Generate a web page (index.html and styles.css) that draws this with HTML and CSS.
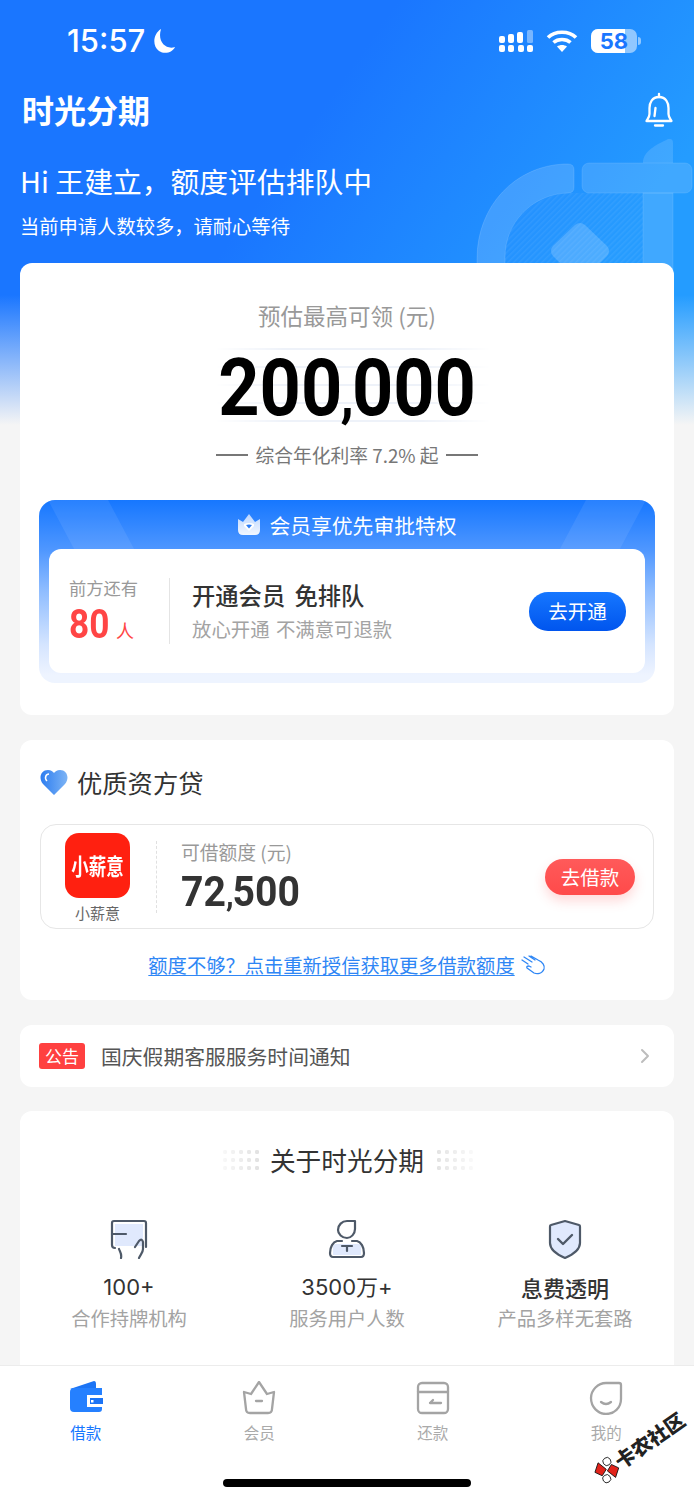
FILE: index.html
```html
<!DOCTYPE html>
<html lang="zh-CN">
<head>
<meta charset="utf-8">
<title>时光分期</title>
<link rel="stylesheet" href="styles.css">
</head>
<body>
<div class="page">
  <svg class="art" viewBox="0 0 222 140" width="222" height="140" aria-hidden="true">
    <defs>
      <pattern id="hatch" width="4" height="4" patternUnits="userSpaceOnUse" patternTransform="rotate(45)"><rect width="4" height="4" fill="#3f9bff" fill-opacity=".1"/><rect width="1.500" height="4" fill="#fff" fill-opacity=".06"/></pattern>
    </defs>
    <path d="M33 140 V118 C33 84 62 56 96 54 H171 V140 Z" fill="url(#hatch)"/>
    <path d="M5 140 V120 C5 66 44 27 92 25 H96 Q102 25 102 31 V48 Q102 54 96 54 C60 55 33 84 33 118 V140 Z" fill="#fff" fill-opacity=".15" stroke="#fff" stroke-opacity=".12"/>
    <rect x="110" y="24" width="110" height="30" rx="7" fill="#fff" fill-opacity=".13" stroke="#fff" stroke-opacity=".1"/>
    <path d="M171 24 C171 12 184 6 196 0 Q201 -1 201 4 V24Z" fill="#fff" fill-opacity=".13"/>
    <rect x="171" y="54" width="30" height="86" fill="#fff" fill-opacity=".13" stroke="#fff" stroke-opacity=".1"/>
    <path d="M81 107 L103 86 Q108 82 113 86 L135 107 Q139 112 135 117 L112 140 H104 L81 117 Q77 112 81 107Z" fill="#fff" fill-opacity=".18"/>
  </svg>

  <header class="hero">
    <div class="status">
      <div class="clock"><span>15:57</span>
        <svg width="24" height="26" viewBox="0 0 24 26"><path d="M9 1 C1 6 0 18 7 23 C13 27 21 24 23 19 C14 22 5 14 9 1Z" fill="#fff"/></svg>
      </div>
      <div class="status-right">
        <svg width="36" height="22" viewBox="0 0 36 22" fill="#fff">
          <rect x="0" y="6" width="6" height="7" rx="2"/><rect x="9" y="4" width="6" height="9" rx="2"/><rect x="18" y="2" width="6" height="11" rx="2"/><rect x="28" y="0" width="6" height="13" rx="1.5" fill-opacity=".4"/>
          <rect x="0" y="15" width="6" height="7" rx="2"/><rect x="9" y="15" width="6" height="7" rx="2"/><rect x="19" y="15" width="6" height="7" rx="2"/><rect x="28" y="15" width="6" height="7" rx="2"/>
        </svg>
        <svg class="wifi" width="32" height="24" viewBox="0 0 32 24" fill="none" stroke="#fff" stroke-width="3.6"><path d="M2 8.5 C9 1.5 23 1.5 30 8.5"/><path d="M7.5 13.5 C12 9.5 20 9.5 24.500 13.500"/><path d="M16 23 L11 17.500 C14 15.500 18 15.500 21 17.500 Z" fill="#fff" stroke="none"/></svg>
        <div class="battery"><span class="battery-fill"></span><span class="battery-num">58</span><i class="battery-cap"></i></div>
      </div>
    </div>
    <div class="brand-row">
      <span class="brand">时光分期</span>
      <svg width="30" height="36" viewBox="0 0 30 36" fill="none" stroke="#fff" stroke-width="2.300" stroke-linecap="round" stroke-linejoin="round"><path d="M15 5 C8 5 5.500 11 5.500 16 V22 C5.500 25 3.500 27 2.500 29 H27.500 C26.500 27 24.500 25 24.500 22 V16 C24.500 11 22 5 15 5Z"/><path d="M15 2 V5"/><path d="M11 33.500 H19"/><path d="M11.500 16 L10.500 24"/></svg>
    </div>
    <h1 class="greet">Hi 王建立，额度评估排队中</h1>
    <p class="greet-sub">当前申请人数较多，请耐心等待</p>
  </header>

  <main class="cards">
    <section class="card quota">
      <div class="quota-label">预估最高可领 (元)</div>
      <div class="amount"><span class="amount-num">200<b class="comma">,</b>000</span></div>
      <div class="rate"><i></i><span>综合年化利率 7.2% 起</span><i></i></div>
      <div class="vip">
        <span class="ray ray-a"></span><span class="ray ray-b"></span>
        <div class="vip-head">
          <svg width="24" height="22" viewBox="0 0 24 22"><defs><linearGradient id="cg" x1="0" y1="0" x2="0" y2="1"><stop offset="0" stop-color="#bcd6ff"/><stop offset="1" stop-color="#f2f7ff"/></linearGradient></defs><path d="M1 5 L6 8 L12 0 L18 8 L23 5 V16 Q23 21 18 21 H6 Q1 21 1 16Z" fill="url(#cg)"/><path d="M7 10 Q12 8 17 10 V12 L12 17 L7 12Z" fill="#fff"/><path d="M9 11 L12 14.500 L15 11 Q12 10 9 11Z" fill="#2b7cf5"/></svg>
          <span>会员享优先审批特权</span>
        </div>
        <div class="vip-body">
          <div class="queue">
            <div class="queue-label">前方还有</div>
            <div class="queue-num"><b>80</b><span>人</span></div>
          </div>
          <div class="vip-text">
            <div class="vip-title">开通会员 免排队</div>
            <div class="vip-sub">放心开通 不满意可退款</div>
          </div>
          <a class="btn btn-blue">去开通</a>
        </div>
      </div>
    </section>

    <section class="card lender">
      <div class="lender-title">
        <svg width="28" height="25" viewBox="0 0 28 25"><defs><linearGradient id="hg" x1="0" x2="1"><stop offset="0" stop-color="#2d7df0"/><stop offset="1" stop-color="#7db4f5"/></linearGradient></defs><path d="M14 25 L3 14 C-2 8 1 0 8 0 C11 0 13 1.500 14 3 C15 1.500 17 0 20 0 C27 0 30 8 25 14Z" fill="url(#hg)"/><path d="M7 11 C4 8 6 4 9 4" stroke="#fff" stroke-width="1.500" fill="none"/></svg>
        <span>优质资方贷</span>
      </div>
      <div class="lender-box">
        <div class="lender-brand">
          <div class="lender-logo"><span>小薪意</span></div>
          <div class="lender-name">小薪意</div>
        </div>
        <i class="lender-rule"></i>
        <div class="lender-info">
          <div class="lender-label">可借额度 (元)</div>
          <div class="lender-amount"><span>72<b class="comma-sm">,</b>500</span></div>
        </div>
        <a class="btn btn-red">去借款</a>
      </div>
      <div class="more">
        <a>额度不够？点击重新授信获取更多借款额度</a>
        <svg width="26" height="20" viewBox="0 0 26 20" fill="none" stroke="#2e86f5" stroke-width="1.300" stroke-linecap="round" stroke-linejoin="round"><path d="M2 5 L8 9 M4 2 L12 7 M9 1 L15 5 M11 1 L18 5 C23 7 25 11 24 14 C22 19 17 19 14 18 L7 13 Q6 11 9 11 L11 12"/></svg>
      </div>
    </section>

    <section class="card notice">
      <span class="tag">公告</span>
      <span class="notice-text">国庆假期客服服务时间通知</span>
      <svg class="chev" width="10" height="16" viewBox="0 0 10 16" fill="none" stroke="#bdbdbd" stroke-width="2" stroke-linecap="round" stroke-linejoin="round"><path d="M2 2 L8 8 L2 14"/></svg>
    </section>

    <section class="card about">
      <div class="about-title">
        <span class="dots dots-l"></span>
        <span>关于时光分期</span>
        <span class="dots dots-r"></span>
      </div>
      <div class="about-grid">
        <div class="about-item">
          <svg width="38" height="40" viewBox="0 0 38 40" fill="none" stroke="#4e5968" stroke-width="2.200" stroke-linecap="round" stroke-linejoin="round"><rect x="5" y="5" width="28" height="22" fill="#e0e9fd" stroke="none"/><path d="M5 29 Q2 29 2 26 V4 Q2 2 4 2 H34 Q36 2 36 4 V28"/><path d="M2 15 H16"/><path d="M9 30 C10 33 12 35 11 39"/><path d="M25 28 L29 22 Q32 19 33 23 V30 C33 34 30 36 29 39"/></svg>
          <div class="about-num">100+</div>
          <div class="about-sub">合作持牌机构</div>
        </div>
        <div class="about-item">
          <svg width="38" height="40" viewBox="0 0 38 40" fill="none" stroke="#4e5968" stroke-width="2.200" stroke-linecap="round" stroke-linejoin="round"><path d="M5 28 Q5 25 8 25 H30 Q33 25 33 28 V36 H5Z" fill="#e0e9fd" stroke="none"/><path d="M19 2 H27 V10 C27 15 23 19 19 19 C14 19 10 15 10 11 C10 6 14 2 19 2Z"/><path d="M14 22 H9 C5 23 2 28 2 34 Q2 38 5 38 H33 Q36 38 36 34 C36 28 33 23 29 22 H24"/><path d="M14 27 H24"/><path d="M19 27 V32"/></svg>
          <div class="about-num">3500万+</div>
          <div class="about-sub">服务用户人数</div>
        </div>
        <div class="about-item">
          <svg width="34" height="40" viewBox="0 0 34 40" fill="none" stroke="#4e5968" stroke-width="2.200" stroke-linecap="round" stroke-linejoin="round"><path d="M17 2 L31 6 Q32 6 32 8 V24 C32 31 24 36 17 39 C10 36 2 31 2 24 V8 Q2 6 3 6Z" fill="#e0e9fd"/><path d="M10 20 L15 25 L24 16" stroke-width="2.400"/></svg>
          <div class="about-num about-num-cn">息费透明</div>
          <div class="about-sub">产品多样无套路</div>
        </div>
      </div>
    </section>
  </main>

  <nav class="tabbar">
    <div class="tab tab-on">
      <svg width="34" height="34" viewBox="0 0 34 34"><path d="M1 8 L25 0 Q27 0 27 3 V8Z" fill="#1c74f5"/><path d="M1 11 Q1 7 5 7 H33 V28 Q33 31 30 31 H5 Q1 31 1 27Z" fill="#2580ff"/><rect x="18" y="14" width="16" height="12" fill="#fff"/><rect x="21" y="17" width="13" height="6" fill="#1c74f5"/><rect x="22" y="19" width="2.500" height="2.500" fill="#fff"/></svg>
      <span>借款</span>
    </div>
    <div class="tab">
      <svg width="34" height="34" viewBox="0 0 34 34" fill="none" stroke="#a4a4a4" stroke-width="2.300" stroke-linecap="round" stroke-linejoin="round"><path d="M2 11 L9 13 L17 1 L25 13 L32 11 L30 28 Q30 32 26 32 H8 Q4 32 4 28Z"/><path d="M14 20 H20"/></svg>
      <span>会员</span>
    </div>
    <div class="tab">
      <svg width="34" height="34" viewBox="0 0 34 34" fill="none" stroke="#a4a4a4" stroke-width="2.300" stroke-linecap="round" stroke-linejoin="round"><rect x="2" y="2" width="30" height="30" rx="4"/><path d="M2 11 H32"/><path d="M14 22 H25 M14 22 L17 19"/></svg>
      <span>还款</span>
    </div>
    <div class="tab">
      <svg width="34" height="34" viewBox="0 0 34 34" fill="none" stroke="#a4a4a4" stroke-width="2.300" stroke-linecap="round" stroke-linejoin="round"><path d="M17 2 H30 Q32 2 32 4 V18 C32 27 25 33 17 33 C9 33 2 26 2 17 C2 9 9 2 17 2Z"/><path d="M12 21 Q17 25 22 21"/></svg>
      <span>我的</span>
    </div>
  </nav>
  <div class="home-bar"></div>
  <div class="watermark">
    <svg width="24" height="24" viewBox="0 0 24 24"><path d="M1 7 L9 1 L12 11 L5 14Z" fill="#e2231a" stroke="#111" stroke-width=".8"/><path d="M23 17 L15 23 L12 13 L19 10Z" fill="#e2231a" stroke="#111" stroke-width=".8"/><circle cx="17" cy="5" r="4" fill="#fff" stroke="#111" stroke-width=".8"/><circle cx="7" cy="19" r="4" fill="#fff" stroke="#111" stroke-width=".8"/></svg>
    <span>卡农社区</span>
  </div>
</div>
</body>
</html>
```

FILE: styles.css
```css
* { box-sizing: border-box; }
html, body { margin: 0; padding: 0; }
body {
  font-family: "Inter", "Noto Sans CJK SC", sans-serif;
  color: #333;
}
.page {
  position: relative;
  width: 694px;
  height: 1500px;
  overflow: hidden;
  background:
    linear-gradient(180deg, rgba(245,245,245,0) 295px, rgba(245,245,245,1) 425px),
    linear-gradient(125deg, #1a76ff 40%, #249cff 80%) 0 0 / 694px 430px no-repeat;
  background-color: #f5f5f5;
}
.art { position: absolute; left: 472px; top: 139px; }

.hero { position: relative; padding: 0 0 0 20px; height: 263px; color: #fff; }
.status { display: flex; justify-content: space-between; align-items: center; height: 82px; padding: 0 57px 0 47px; }
.clock { display: flex; align-items: center; gap: 7px; font: 500 31px/40px "Inter", sans-serif; }
.status-right { display: flex; align-items: center; gap: 0; }
.wifi { margin: 0 13px 0 11px; }
.battery { position: relative; width: 46px; height: 24px; border-radius: 7px; background: rgba(255,255,255,.5); text-align: center; color: #1a76ff; font: 700 22px/24px "Inter", sans-serif; }
.battery-fill { position: absolute; left: 0; top: 0; width: 34px; height: 24px; background: #fff; border-radius: 7px 0 0 7px; }
.battery-num { position: relative; }
.battery-cap { position: absolute; right: -4px; top: 8px; width: 3px; height: 8px; background: rgba(255,255,255,.5); border-radius: 0 3px 3px 0; }

.brand-row { display: flex; justify-content: space-between; align-items: center; height: 48px; margin-top: 4px; padding: 0 20px 0 2px; }
.brand { position: relative; top: -1px; font: 700 32px/48px "Noto Sans CJK SC", sans-serif; letter-spacing: 0; }
.greet { margin: 26px 0 0; font: 400 28.800px/42px "Noto Sans CJK SC", sans-serif; }
.greet-sub { margin: 11px 0 0; font: 400 19.300px/26px "Noto Sans CJK SC", sans-serif; }

.cards { position: relative; display: flex; flex-direction: column; gap: 25px; padding: 0 20px; }
.card { background: #fff; border-radius: 12px; }

.quota { height: 452px; padding: 35px 19px 0; text-align: center; }
.quota-label { font: 400 22.500px/34px "Noto Sans CJK SC", sans-serif; color: #999; }
.amount {
  position: relative;
  margin-top: 18px;
  height: 76px;
  font: 700 80px/76px "Roboto", sans-serif;
  color: #000;
}
.amount::before {
  content: "";
  position: absolute;
  left: 176px;
  top: -2px;
  width: 276px;
  height: 76px;
  background: repeating-linear-gradient(180deg, #eef2f9 0 2px, transparent 2px 18px);
  -webkit-mask: linear-gradient(90deg, transparent, #000 25%, #000 75%, transparent);
  mask: linear-gradient(90deg, transparent, #000 25%, #000 75%, transparent);
}
.amount-num { position: relative; display: inline-block; transform: scaleX(.9); }
.comma { font-size: 60px; font-weight: 700; letter-spacing: -2px; margin-left: -2px; }
.rate { display: flex; justify-content: center; align-items: center; gap: 7px; margin-top: 15px; font: 400 18.800px/28px "Noto Sans CJK SC", sans-serif; color: #777; }
.rate i { width: 32px; height: 1.500px; background: #777; }

.vip { position: relative; margin-top: 31px; height: 183px; padding: 0 10px; border-radius: 16px; background: linear-gradient(180deg, #1677ff 0, #4f97ff 50px, #8ebcff 90px, #d5e5ff 145px, #eef4ff 175px); overflow: hidden; }
.ray { position: absolute; top: 0; height: 60px; width: 60px; background: rgba(255,255,255,.08); transform: skewX(28deg); }
.ray-a { left: 25px; }
.ray-b { right: 25px; transform: skewX(-28deg); }
.vip-head { position: relative; display: flex; justify-content: center; align-items: center; gap: 8px; height: 49px; color: #fff; font: 400 20.800px/30px "Noto Sans CJK SC", sans-serif; }
.vip-body { position: relative; display: flex; align-items: center; height: 124px; padding: 0 19px 0 20px; background: #fff; border-radius: 12px; text-align: left; }
.queue { width: 101px; height: 66px; border-right: 1px solid #e4e4e4; }
.queue-label { font: 400 17.300px/24px "Noto Sans CJK SC", sans-serif; color: #999; margin-top: -2px; }
.queue-num { display: flex; align-items: baseline; gap: 6px; margin-top: 3px; color: #ff4545; font: 400 18px/44px "Noto Sans CJK SC", sans-serif; }
.queue-num b { display: inline-block; margin-right: -5px; transform: scaleX(.88); transform-origin: 0 50%; font: 700 40px/44px "Roboto", sans-serif; }
.vip-text { flex: 1; padding-left: 22px; }
.vip-title { position: relative; top: 1px; font: 500 23.300px/32px "Noto Sans CJK SC", sans-serif; color: #333; word-spacing: 4px; }
.vip-sub { margin-top: 4px; font: 400 19.400px/30px "Noto Sans CJK SC", sans-serif; color: #a3a3a3; word-spacing: 2px; }
.btn { display: block; color: #fff; text-align: center; font: 400 19.500px/38px "Noto Sans CJK SC", sans-serif; border-radius: 19px; }
.btn-blue { width: 97px; height: 39px; background: linear-gradient(180deg, #1677ff, #0055ee); }
.btn-red { width: 90px; height: 36px; line-height: 36px; border-radius: 18px; background: linear-gradient(180deg, #ff5a5a, #ff4a4a); box-shadow: 0 6px 12px rgba(255,80,80,.22); }

.lender { height: 260px; padding: 0 20px; }
.lender-title { display: flex; align-items: center; gap: 9px; height: 84px; font: 400 25.300px/36px "Noto Sans CJK SC", sans-serif; color: #333; }
.lender-box { display: flex; align-items: center; height: 105px; padding-right: 18px; border: 1px solid #e6e6e6; border-radius: 16px; }
.lender-brand { width: 115px; flex: none; display: flex; flex-direction: column; align-items: center; margin-top: 6px; padding-right: 2px; }
.lender-logo { width: 65px; height: 65px; border-radius: 14px; background: #ff2010; color: #fff; text-align: center; font: 700 17.500px/65px "Noto Sans CJK SC", sans-serif; }
.lender-logo span { display: inline-block; transform: scaleY(1.3); }
.lender-name { margin-top: 1px; font: 400 15px/28px "Noto Sans CJK SC", sans-serif; color: #666; }
.lender-rule { flex: none; height: 72px; border-left: 1px dashed #e0e0e0; }
.lender-info { flex: 1; padding-left: 24px; margin-top: 2px; }
.lender-label { font: 400 18.800px/26px "Noto Sans CJK SC", sans-serif; color: #999; }
.lender-amount { position: relative; top: 2px; font: 700 43px/48px "Roboto", sans-serif; color: #333; }
.lender-amount span { display: inline-block; transform: scaleX(.91); transform-origin: 0 50%; }
.comma-sm { font-size: 34px; font-weight: 700; letter-spacing: -1px; }
.more { display: flex; justify-content: center; align-items: center; gap: 5px; margin-top: 21px; font: 400 19.300px/30px "Noto Sans CJK SC", sans-serif; color: #2e86f5; }
.more a { text-decoration: underline; text-underline-offset: 2px; }

.notice { display: flex; align-items: center; height: 62px; margin-bottom: -1px; padding: 0 24px 0 19px; }
.tag { width: 46px; height: 26px; background: #ff4040; color: #fff; border-radius: 3px; text-align: center; font: 400 17px/26px "Noto Sans CJK SC", sans-serif; }
.notice-text { flex: 1; margin-left: 16px; font: 400 20.800px/30px "Noto Sans CJK SC", sans-serif; color: #555; }

.about { height: 300px; padding-top: 29px; }
.about-title { display: flex; justify-content: center; align-items: center; gap: 11px; font: 400 25.700px/40px "Noto Sans CJK SC", sans-serif; color: #333; }
.dots { width: 38px; height: 24px; background-image: radial-gradient(circle, #e2e2e2 2px, transparent 2.300px); background-size: 8px 8px; }
.dots-l { -webkit-mask: linear-gradient(90deg, rgba(0,0,0,.2), #000); mask: linear-gradient(90deg, rgba(0,0,0,.2), #000); }
.dots-r { -webkit-mask: linear-gradient(270deg, rgba(0,0,0,.2), #000); mask: linear-gradient(270deg, rgba(0,0,0,.2), #000); }
.about-grid { display: grid; grid-template-columns: repeat(3, 218px); justify-content: center; margin-top: 39px; text-align: center; }
.about-item { display: flex; flex-direction: column; align-items: center; }
.about-num { margin-top: 11px; font: 400 22px/34px "Inter", "Noto Sans CJK SC", sans-serif; color: #333; }
.about-num-cn { font-family: "Noto Sans CJK SC", sans-serif; font-weight: 500; }
.about-sub { margin-top: -1px; font: 400 19.300px/30px "Noto Sans CJK SC", sans-serif; color: #a3a3a3; }

.tabbar { position: absolute; left: -1px; right: 0; bottom: 0; height: 135px; display: grid; grid-template-columns: repeat(4, 173.500px); background: #fff; border-top: 1px solid #ececec; }
.tab { display: flex; flex-direction: column; align-items: center; padding-top: 15px; color: #aaa; font: 400 15.500px/24px "Noto Sans CJK SC", sans-serif; }
.tab span { margin-top: 5px; }
.tab-on { color: #1677ff; }
.home-bar { position: absolute; left: 223px; top: 1479px; width: 248px; height: 8px; border-radius: 4px; background: #000; }
.watermark { position: absolute; left: 597px; top: 1465px; display: flex; align-items: center; white-space: nowrap; transform: rotate(-35deg); transform-origin: 0 50%; font: 900 20px/24px "Noto Sans CJK SC", sans-serif; color: #222; }
```
